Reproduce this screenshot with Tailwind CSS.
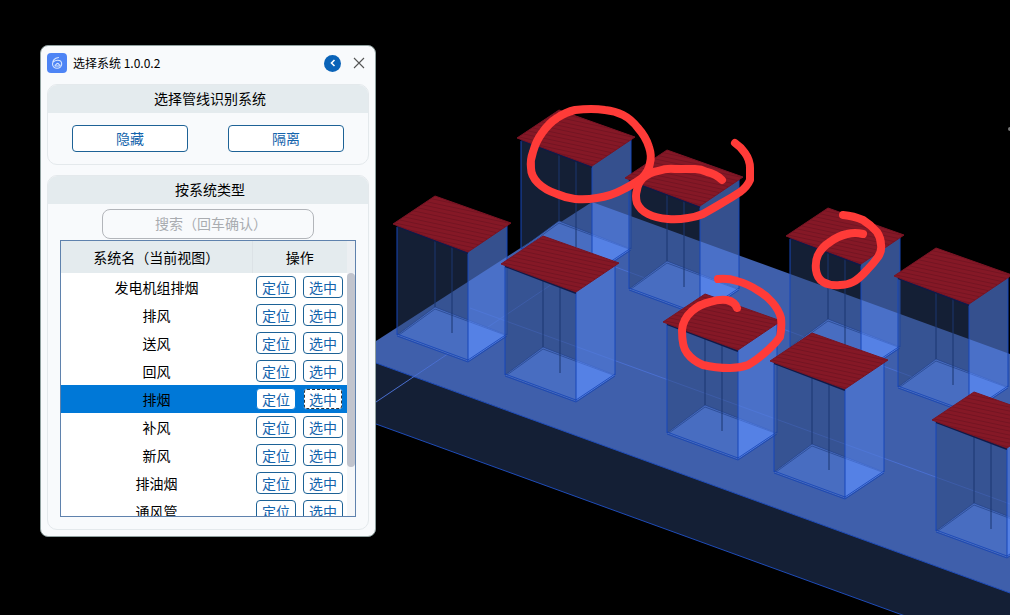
<!DOCTYPE html>
<html lang="zh-CN">
<head>
    <meta charset="UTF-8">
    <meta name="viewport" content="width=device-width, initial-scale=1">
    <title>选择系统</title>
    <script src="https://cdn.jsdelivr.net/npm/@tailwindcss/browser@4"></script>
</head>
<body class="bg-black font-['Noto_Sans_CJK_SC',sans-serif] text-sm text-black">

<main class="relative flex min-h-screen items-start overflow-hidden px-10 py-[45px]">

    <!-- 三维视图 -->
    <svg class="absolute inset-0 h-full w-full" viewBox="0 0 1010 615" preserveAspectRatio="xMinYMin slice" aria-hidden="true">
        <defs>
            <pattern id="ribs" width="8" height="4" patternUnits="userSpaceOnUse" patternTransform="skewY(12)">
                <rect width="8" height="4" fill="#851826"/>
                <rect width="8" height="1" fill="#741422"/>
            </pattern>
            <g id="tower">
                <path d="M0 112L72 140L33 166L-38 140Z" fill="#5f8fff"/>
                <path d="M-38 140L0 112L72 140M-36 140L0 114L70 140" fill="none" stroke="#1d3f96" stroke-width=".7"/>
                <path d="M0 36V112M17 50V138" stroke="#0c2a6c" stroke-width="1"/>
                <path d="M-38 30L33 56V166L-38 140Z" fill="#2c4576" fill-opacity=".45"/>
                <path d="M33 56L72 29V140L33 166Z" fill="#5079d8" fill-opacity=".66"/>
                <path d="M-38 32V140M33 58V166M72 30V140" stroke="#1647b8" stroke-width="1"/>
                <path d="M-38 139L33 165L72 139M-38 141L33 167L72 141" fill="none" stroke="#1443b4" stroke-width=".8"/>
                <path d="M-38 31L33 58" fill="none" stroke="#101a48" stroke-width="2"/>
                <path d="M0 1L76 28L33 57L-42 29Z" fill="url(#ribs)" stroke="#781424" stroke-width="1"/>
            </g>
        </defs>

        <!-- 楼板 -->
        <path d="M376 363L1010 593V654L376 424Z" fill="#141f35"/>
        <path d="M376 341L592 202L1010 354V593L376 363Z" fill="#3f5fab"/>
        <path d="M376 424L1010 654M376 363L1010 593" stroke="#1f4cb8" stroke-width="1"/>
        <path d="M376 402L591 258L1010 413M470 308L1010 504" fill="none" stroke="#4a6fd0" stroke-width="1"/>

        <use href="#tower" x="559" y="109"/>
        <use href="#tower" x="667" y="149"/>
        <use href="#tower" x="828" y="207"/>
        <use href="#tower" x="936" y="247"/>
        <use href="#tower" x="435" y="195"/>
        <use href="#tower" x="543" y="235"/>
        <use href="#tower" x="705" y="293"/>
        <use href="#tower" x="812" y="332"/>
        <use href="#tower" x="974" y="391"/>
        <circle cx="1010" cy="129" r="2" fill="#777"/>

        <!-- 手绘圈注 -->
        <g fill="none" stroke="#ff3b38" stroke-width="8" stroke-linecap="round" stroke-linejoin="round">
            <path d="M575 110Q592 108 605 110Q615 111 623 115Q631 119 638 128Q646 137 649 147Q652 156 650 163Q649 171 642 178Q634 184 622 190Q611 196 597 198Q586 200 575 199Q566 198 557 194Q545 190 538 183Q531 176 531 168Q530 160 533 152Q536 141 542 133Q549 123 557 118Q566 112 575 110Z"/>
            <path d="M735 143Q741 147 745 153Q750 160 750 168V180Q747 187 740 192Q731 198 722 203Q712 209 703 214Q696 217 688 218Q677 220 668 219Q656 218 648 214Q640 210 637 203Q635 196 637 190Q638 183 643 178Q650 172 658 171Q667 168 675 169H695Q701 169 707 172Q716 174 722 180"/>
            <path d="M843 215Q854 216 863 220Q871 225 877 232Q881 238 881 245Q882 251 878 257Q873 264 867 270Q859 279 853 282Q847 285 840 285Q830 286 823 282Q817 278 816 270Q815 261 818 255Q822 247 830 242Q838 236 847 234Q855 232 863 234"/>
            <path d="M718 279Q728 278 737 281Q748 284 757 290Q766 295 772 302Q779 310 781 318Q782 328 780 337Q775 344 768 350Q757 360 748 365Q740 368 730 368Q715 368 703 365Q693 361 687 353Q682 347 682 330Q683 319 692 311Q700 304 710 302Q719 299 727 300Q735 302 737 308"/>
        </g>
    </svg>

    <!-- 选择系统面板 -->
    <section class="relative w-[336px] shrink-0 rounded-lg border border-[#8fa09f] bg-[#f8fafc] px-1.5 pb-1.5">
        <header class="mb-1 flex h-[34px] items-center">
            <svg class="size-5" viewBox="0 0 20 20" aria-hidden="true">
                <rect width="20" height="20" rx="4" fill="#4d84f5"/>
                <g fill="none" stroke="#d5e5ff" stroke-width="1.1" stroke-linecap="round" stroke-linejoin="round">
                    <path d="M11.500 4.500C8 5 5.500 7.500 5.500 11a4.600 4.200 0 0 0 9.200 0c0-2.500-2-3.800-4.200-3.800-2 0-3.700 1-4.700 2.300"/>
                    <path d="M8 13c0-1.200.9-1.500 1.300-1.500.3-1.500 2.300-1.500 2.600 0 1 .1 1.300.7 1.300 1.500z"/>
                </g>
            </svg>
            <h1 class="ml-1.5 flex-1 text-xs">选择系统 1.0.0.2</h1>
            <button type="button" aria-label="返回" class="mr-3 flex size-[17px] items-center justify-center rounded-full bg-[#0a63b8]">
                <svg class="size-2.5" viewBox="0 0 10 10" fill="none" stroke="#fff" stroke-width="1.6"><path d="M6.500 2L3.500 5L6.500 8"/></svg>
            </button>
            <button type="button" aria-label="关闭" class="mr-1 flex size-3 items-center justify-center">
                <svg class="size-3" viewBox="0 0 12 12" fill="none" stroke="#555" stroke-width="1.1"><path d="M1 1L11 11M11 1L1 11"/></svg>
            </button>
        </header>

        <section class="overflow-hidden rounded-[10px] border border-[#e4e9ec]">
            <h2 class="h-7 bg-[#e4ebee] pl-1 text-center leading-[26px]">选择管线识别系统</h2>
            <div class="flex gap-10 px-6 py-3">
                <button type="button" class="h-[27px] flex-1 rounded border border-[#1d6296] bg-white pb-0.5 text-[#1464ac]">隐藏</button>
                <button type="button" class="h-[27px] flex-1 rounded border border-[#1d6296] bg-white pb-0.5 text-[#1464ac]">隔离</button>
            </div>
        </section>

        <section class="mt-2.5 overflow-hidden rounded-[10px] border border-[#e4e9ec] px-3 pb-3">
            <h2 class="-mx-3 h-7 bg-[#e4ebee] pl-1 text-center leading-[26px]">按系统类型</h2>
            <input type="text" aria-label="搜索" placeholder="搜索（回车确认）" class="mx-auto mt-[5px] block h-[30px] w-[212px] rounded-lg border border-[#b2b5ba] pb-0.5 pl-1.5 text-center placeholder:text-[#a9acb0]">

            <div class="mt-px flex h-[277px] overflow-hidden border border-[#5f82ad] bg-white">
                <table class="w-full table-fixed self-start border-collapse text-center">
                    <thead>
                        <tr class="h-8 bg-[#e4ebee]">
                            <th class="border-r border-[#dce2e6] p-0 font-normal">系统名（当前视图）</th>
                            <th class="w-[95px] p-0 font-normal">操作</th>
                        </tr>
                    </thead>
                    <tbody id="systems"></tbody>
                </table>
                <div class="w-2 shrink-0 bg-[#f5f7f9]">
                    <div class="h-8 bg-[#eceff2]"></div>
                    <div class="h-[194px] rounded-full bg-[#c1c4cd]"></div>
                </div>
            </div>
        </section>
    </section>
</main>

<script>
    const systems = ['发电机组排烟', '排风', '送风', '回风', '排烟', '补风', '新风', '排油烟', '通风管'];
    const selected = '排烟';
    const button = 'h-[22px] w-10 rounded border bg-white leading-5 text-[#1464ac]';

    document.getElementById('systems').innerHTML = systems.map((name) => {
        const on = name === selected;
        const border = on ? 'border-[#0078d7]' : 'border-[#1d6296]';
        const focus = on ? 'outline outline-dashed outline-[#333] -outline-offset-2' : '';
        return `
            <tr class="h-7 ${on ? 'bg-[#0078d7]' : ''}">
                <td class="p-0">${name}</td>
                <td class="p-0">
                    <div class="flex justify-center gap-[7px]">
                        <button type="button" class="${button} ${border}">定位</button>
                        <button type="button" class="${button} ${border} ${focus}">选中</button>
                    </div>
                </td>
            </tr>`;
    }).join('');
</script>

</body>
</html>
